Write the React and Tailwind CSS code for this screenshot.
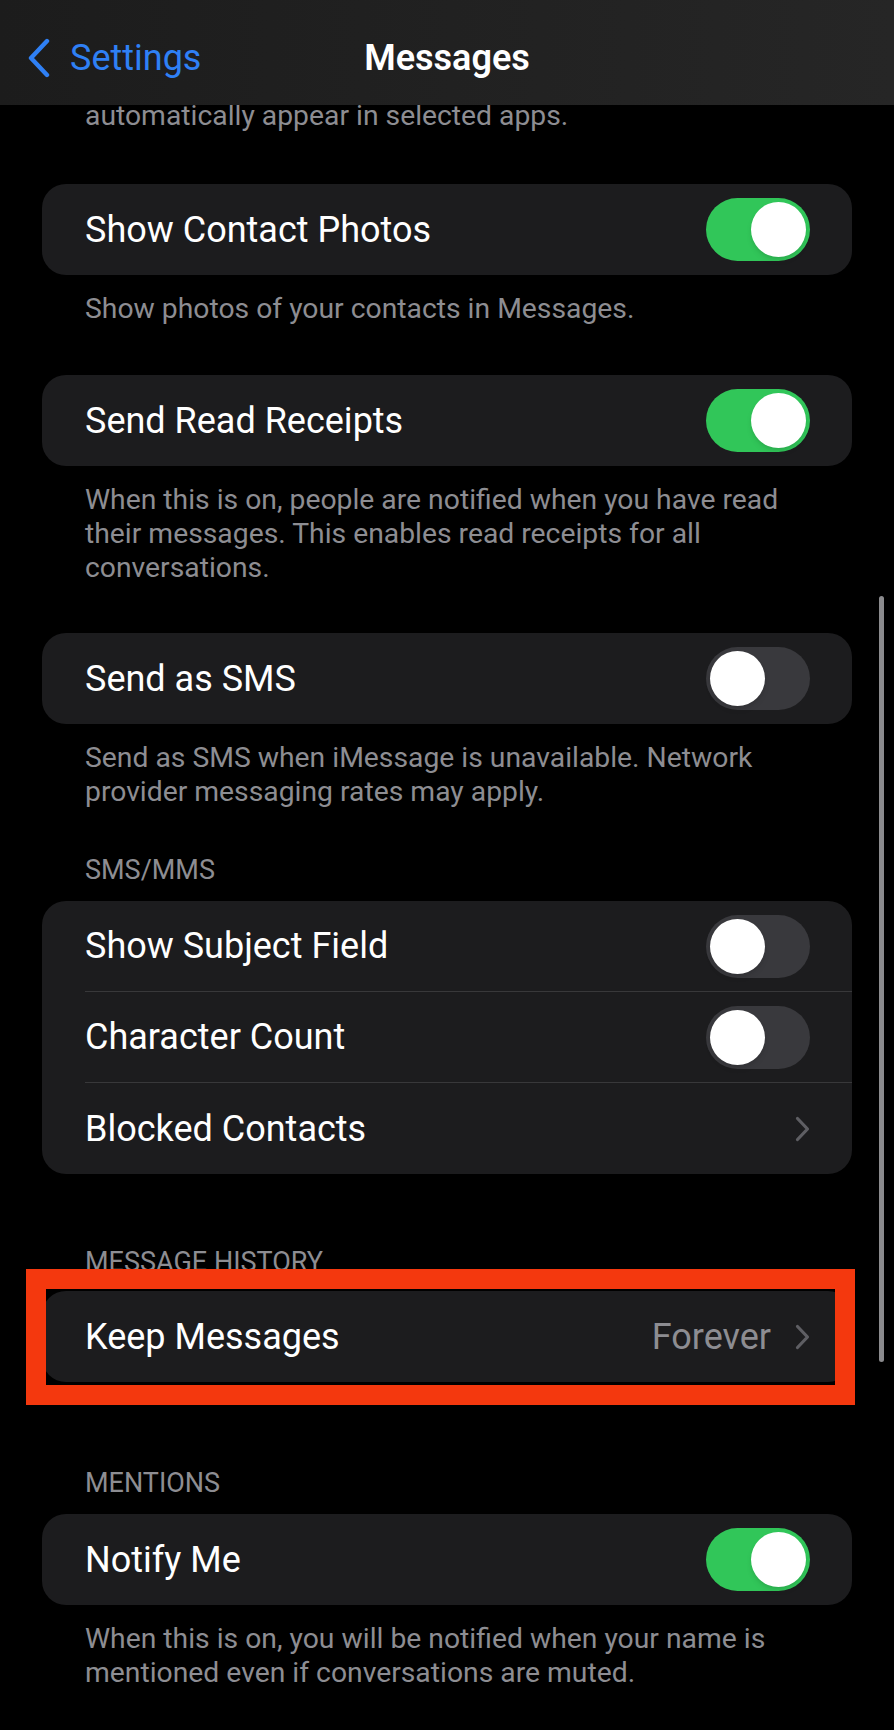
const font = { fontFamily: "Roboto, 'Liberation Sans', sans-serif" };

function Toggle({ on }) {
  return (
    <div
      className={`flex h-[63px] w-[104px] shrink-0 items-center rounded-full p-[4px] ${
        on ? "justify-end bg-[#31c659]" : "justify-start bg-[#39393d]"
      }`}
    >
      <div className="h-[55px] w-[55px] rounded-full bg-white shadow-md" />
    </div>
  );
}

function Chevron() {
  return (
    <svg width="15" height="26" viewBox="0 0 15 26" fill="none" className="shrink-0">
      <path d="M2.5 2.5 L12.5 13 L2.5 23.5" stroke="#5e5e63" strokeWidth="3.2" strokeLinecap="round" strokeLinejoin="round" />
    </svg>
  );
}

function BackChevron() {
  return (
    <svg width="26" height="40" viewBox="0 0 26 40" fill="none" className="shrink-0">
      <path d="M21 3 L5 20 L21 37" stroke="#2f80f5" strokeWidth="4.4" strokeLinecap="round" strokeLinejoin="round" />
    </svg>
  );
}

function Row({ label, toggle, value, chevron, last = true }) {
  return (
    <div className="flex h-[91px] items-stretch pl-[43px]">
      <div
        className={`flex flex-1 items-center justify-between pr-[42px] ${
          last ? "" : "border-b border-[#38383a]"
        }`}
      >
        <span className="text-[36px] text-white">{label}</span>
        {toggle !== undefined && <Toggle on={toggle} />}
        {chevron && (
          <div className="flex items-center gap-[24px]">
            {value && <span className="text-[36px] text-[#8d8d92]">{value}</span>}
            <Chevron />
          </div>
        )}
      </div>
    </div>
  );
}

function Card({ children, className = "" }) {
  return <div className={`overflow-hidden rounded-[24px] bg-[#1c1c1e] ${className}`}>{children}</div>;
}

function Footer({ children, className = "" }) {
  return (
    <p className={`pl-[43px] pr-[30px] text-[28.3px] leading-[34px] text-[#8d8d92] ${className}`}>{children}</p>
  );
}

function Label({ children, className = "" }) {
  return <p className={`pl-[43px] text-[27px] leading-[34px] text-[#8d8d92] ${className}`}>{children}</p>;
}

export default function App() {
  return (
    <div className="relative h-[1730px] w-[894px] overflow-hidden bg-black" style={font}>
      <header className="relative flex h-[105px] items-center bg-gradient-to-r from-[#1c1c1c] to-[#262626] pt-[11px]">
        <div className="flex items-center pl-[26px] text-[#2f80f5]">
          <BackChevron />
          <span className="ml-[18px] text-[36px]">Settings</span>
        </div>
        <h1 className="absolute left-0 right-0 top-[11px] flex h-[94px] items-center justify-center text-[36px] font-semibold text-white">
          Messages
        </h1>
      </header>

      <div className="px-[42px]">
        <p className="h-[22px] pl-[43px] text-[28.3px] leading-[22px] text-[#8d8d92]">
          automatically appear in selected apps.
        </p>

        <Card className="mt-[57px]">
          <Row label="Show Contact Photos" toggle={true} />
        </Card>
        <Footer className="mt-[17px]">Show photos of your contacts in Messages.</Footer>

        <Card className="mt-[49px]">
          <Row label="Send Read Receipts" toggle={true} />
        </Card>
        <Footer className="mt-[17px]">
          When this is on, people are notified when you have read their messages. This enables read receipts for all
          conversations.
        </Footer>

        <Card className="mt-[48px]">
          <Row label="Send as SMS" toggle={false} />
        </Card>
        <Footer className="mt-[17px]">
          Send as SMS when iMessage is unavailable. Network provider messaging rates may apply.
        </Footer>

        <Label className="mt-[44px]">SMS/MMS</Label>
        <Card className="mt-[14px]">
          <Row label="Show Subject Field" toggle={false} last={false} />
          <Row label="Character Count" toggle={false} last={false} />
          <Row label="Blocked Contacts" chevron />
        </Card>

        <Label className="mt-[71px]">MESSAGE HISTORY</Label>
        <Card className="mt-[12px]">
          <Row label="Keep Messages" value="Forever" chevron />
        </Card>

        <Label className="mt-[84px]">MENTIONS</Label>
        <Card className="mt-[14px]">
          <Row label="Notify Me" toggle={true} />
        </Card>
        <Footer className="mt-[17px]">
          When this is on, you will be notified when your name is mentioned even if conversations are muted.
        </Footer>
      </div>

      {/* annotation box */}
      <div className="absolute left-[26px] top-[1269px] h-[136px] w-[829px] border-[20px] border-[#f4380e]" />

      {/* scroll indicator */}
      <div className="absolute left-[879px] top-[596px] h-[766px] w-[5px] rounded-full bg-[#8b8b8e]" />
    </div>
  );
}
